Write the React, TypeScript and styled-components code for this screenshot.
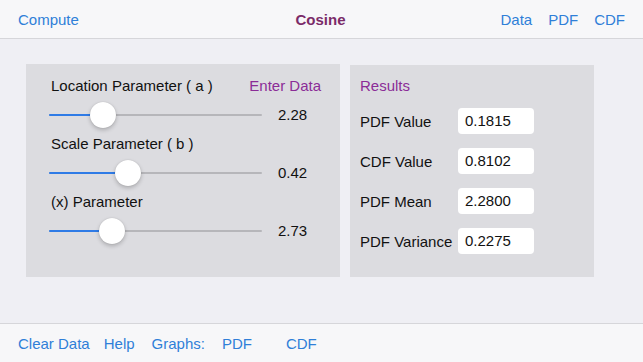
import { Fragment } from 'react'
import styled, { createGlobalStyle } from 'styled-components'

const blue = '#2f7fd8'
const purple = '#8b2c97'

const GlobalStyle = createGlobalStyle`
  html, body {
    margin: 0;
    padding: 0;
    background: #efeff4;
    font-family: "Liberation Sans", Arial, sans-serif;
    font-size: 15px;
    color: #111;
  }
`

const Page = styled.div`
  width: 643px;
  height: 362px;
  display: flex;
  flex-direction: column;
  background: #efeff4;
  overflow: hidden;
`

const TopBar = styled.div`
  height: 38px;
  display: grid;
  grid-template-columns: 1fr auto 1fr;
  align-items: center;
  padding: 0 18px;
  background: #f7f7f9;
  border-bottom: 1px solid #d6d6da;
`

const Title = styled.div`
  color: #7b2b69;
  font-weight: bold;
  padding-right: 2px;
`

const NavGroup = styled.div<{ $end?: boolean }>`
  display: flex;
  justify-content: ${({ $end }) => ($end ? 'flex-end' : 'flex-start')};
  gap: ${({ $end }) => ($end ? '16px' : '0')};
`

const Link = styled.span<{ $gap?: number }>`
  color: ${blue};
  margin-right: ${({ $gap }) => $gap ?? 0}px;
`

const Main = styled.div`
  flex: 1;
  display: flex;
  align-items: flex-start;
  gap: 10px;
  padding: 25px 0 0 26px;
`

const Panel = styled.div<{ $width: number }>`
  width: ${({ $width }) => $width}px;
  height: 213px;
  box-sizing: border-box;
  background: #dcdce0;
  display: flex;
  flex-direction: column;
`

const Params = styled(Panel)`
  padding: 12px 19px 0 23px;
  gap: 6px;
`

const LabelRow = styled.div`
  height: 20px;
  line-height: 20px;
  display: flex;
  justify-content: space-between;
  padding-left: 2px;
`

const Accent = styled.span`
  color: ${purple};
`

const SliderRow = styled.div`
  height: 26px;
  display: flex;
  align-items: center;
  gap: 16px;
`

const Track = styled.div`
  position: relative;
  width: 213px;
  height: 2px;
  background: #b6b6ba;
  border-radius: 1px;
`

const Fill = styled.div`
  height: 100%;
  background: #2f7be6;
  border-radius: 1px;
`

const Thumb = styled.div`
  position: absolute;
  top: 50%;
  width: 26px;
  height: 26px;
  margin: -13px 0 0 -13px;
  border-radius: 50%;
  background: #fff;
  box-shadow: 0 2px 4px rgba(0, 0, 0, 0.22), 0 0 1px rgba(0, 0, 0, 0.2);
`

const Value = styled.span`
  line-height: 20px;
`

const Results = styled(Panel)`
  margin-top: 1px;
  height: 212px;
  padding: 11px 10px 0 10px;
`

const ResultsTitle = styled.div`
  height: 20px;
  line-height: 20px;
  margin-bottom: 12px;
`

const ResultList = styled.div`
  display: flex;
  flex-direction: column;
  gap: 14px;
`

const ResultRow = styled.div`
  display: grid;
  grid-template-columns: 98px 76px;
  align-items: center;
  height: 26px;
`

const Box = styled.div`
  height: 26px;
  line-height: 26px;
  padding: 0 7px;
  background: #fff;
  border-radius: 4px;
`

const BottomBar = styled.div`
  height: 38px;
  display: flex;
  align-items: center;
  padding: 0 18px;
  background: #f7f7f9;
  border-top: 1px solid #d6d6da;
`

const params = [
  { label: 'Location Parameter ( a )', value: '2.28', pos: 54 },
  { label: 'Scale Parameter ( b )', value: '0.42', pos: 79 },
  { label: '(x) Parameter', value: '2.73', pos: 63 },
]

const results = [
  { label: 'PDF Value', value: '0.1815' },
  { label: 'CDF Value', value: '0.8102' },
  { label: 'PDF Mean', value: '2.2800' },
  { label: 'PDF Variance', value: '0.2275' },
]

export default function App() {
  return (
    <Page>
      <GlobalStyle />
      <TopBar>
        <NavGroup>
          <Link>Compute</Link>
        </NavGroup>
        <Title>Cosine</Title>
        <NavGroup $end>
          <Link>Data</Link>
          <Link>PDF</Link>
          <Link>CDF</Link>
        </NavGroup>
      </TopBar>

      <Main>
        <Params $width={314}>
          {params.map((p, i) => (
            <Fragment key={p.label}>
              <LabelRow>
                <span>{p.label}</span>
                {i === 0 && <Accent>Enter Data</Accent>}
              </LabelRow>
              <SliderRow>
                <Track>
                  <Fill style={{ width: p.pos }} />
                  <Thumb style={{ left: p.pos }} />
                </Track>
                <Value>{p.value}</Value>
              </SliderRow>
            </Fragment>
          ))}
        </Params>

        <Results $width={244}>
          <ResultsTitle>
            <Accent>Results</Accent>
          </ResultsTitle>
          <ResultList>
            {results.map(r => (
              <ResultRow key={r.label}>
                <span>{r.label}</span>
                <Box>{r.value}</Box>
              </ResultRow>
            ))}
          </ResultList>
        </Results>
      </Main>

      <BottomBar>
        <Link $gap={14}>Clear Data</Link>
        <Link $gap={17}>Help</Link>
        <Link $gap={17}>Graphs:</Link>
        <Link $gap={34}>PDF</Link>
        <Link>CDF</Link>
      </BottomBar>
    </Page>
  )
}
